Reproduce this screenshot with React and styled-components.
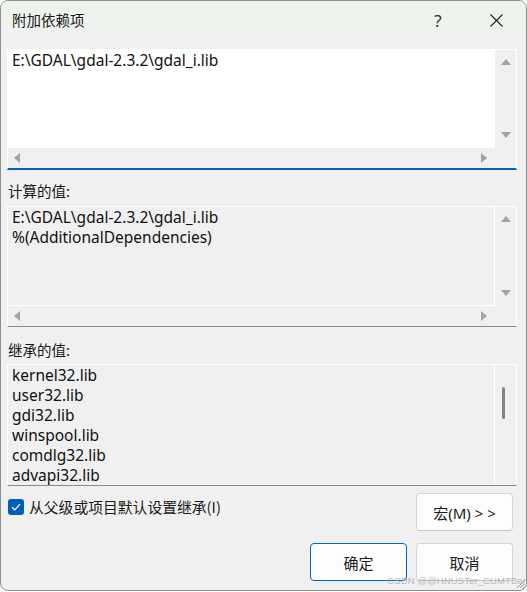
import React from "react";
import styled, { createGlobalStyle, css } from "styled-components";

const Global = createGlobalStyle`
  html, body { margin: 0; padding: 0; background: #ffffff; }
  body { font-family: "Noto Sans", "Noto Sans CJK SC", sans-serif; color: #1b1b1b; }
`;

const Window = styled.div`
  position: relative;
  width: 527px;
  height: 591px;
  box-sizing: border-box;
  border: 1px solid #8e8e8e;
  border-radius: 8px;
  background: #f0f0f0;
  overflow: hidden;
  display: flex;
  flex-direction: column;
`;

const TitleBar = styled.div`
  height: 39px;
  flex: none;
  display: flex;
  align-items: center;
  padding-left: 11px;
  background: linear-gradient(180deg, #eef3ec 0%, #eff2ee 70%, #f0f0f0 100%);
  font-family: "Noto Sans CJK SC", sans-serif;
  font-size: 14.5px;
  color: #1a1a1a;
`;

const Title = styled.div`
  flex: 1;
  margin-top: -2px;
`;

const TitleButton = styled.div`
  width: ${(p) => p.$w}px;
  height: 39px;
  display: flex;
  align-items: center;
  justify-content: center;
  font-family: "Noto Sans", sans-serif;
  font-size: 17px;
  color: #333;
`;

const Body = styled.div`
  flex: 1;
  display: flex;
  flex-direction: column;
  padding: 9px 9px 0 6px;
`;

const Field = styled.div`
  display: flex;
  flex-direction: column;
  border: 1px solid #ffffff;
  border-bottom: ${(p) => (p.$focused ? "2px solid #0067c0" : "1px solid #8a8a8a")};
  background: #f0f0f0;
  margin-top: ${(p) => p.$mt || 0}px;
`;

const FieldMain = styled.div`
  display: flex;
  height: ${(p) => p.$h}px;
`;

const TextArea = styled.div`
  flex: 1;
  background: ${(p) => (p.$white ? "#ffffff" : "#f0f0f0")};
  border-right: 1px solid #ffffff;
  border-bottom: ${(p) => (p.$bottomLine ? "1px solid #ffffff" : "none")};
  padding: 0 0 0 4px;
  font-size: 15.5px;
  line-height: 20px;
  color: #111;
  overflow: hidden;
  white-space: pre;
`;

const VScroll = styled.div`
  width: 21px;
  flex: none;
  display: flex;
  flex-direction: column;
  align-items: center;
  justify-content: ${(p) => (p.$thumb ? "flex-start" : "space-between")};
  padding: ${(p) => (p.$thumb ? "22px 0 0 0" : "9px 0 10px 0")};
  box-sizing: border-box;
`;

const HScroll = styled.div`
  height: 20px;
  display: flex;
  align-items: center;
  justify-content: space-between;
  padding: 0 29px 0 6px;
`;

const Arrow = styled.div`
  width: 0;
  height: 0;
  ${(p) =>
    p.$dir === "up" &&
    css`
      border-left: 5px solid transparent;
      border-right: 5px solid transparent;
      border-bottom: 6px solid #a3a3a3;
    `}
  ${(p) =>
    p.$dir === "down" &&
    css`
      border-left: 5px solid transparent;
      border-right: 5px solid transparent;
      border-top: 6px solid #a3a3a3;
    `}
  ${(p) =>
    p.$dir === "left" &&
    css`
      border-top: 5px solid transparent;
      border-bottom: 5px solid transparent;
      border-right: 6px solid #a3a3a3;
    `}
  ${(p) =>
    p.$dir === "right" &&
    css`
      border-top: 5px solid transparent;
      border-bottom: 5px solid transparent;
      border-left: 6px solid #a3a3a3;
    `}
`;

const Thumb = styled.div`
  width: 3px;
  height: 32px;
  border-radius: 2px;
  background: #858585;
  margin-right: 4px;
`;

const Label = styled.div`
  font-family: "Noto Sans CJK SC", sans-serif;
  font-size: 14.5px;
  line-height: 20px;
  color: #1a1a1a;
  margin-top: ${(p) => p.$mt}px;
  padding-left: 1px;
`;

const OptionsRow = styled.div`
  display: flex;
  justify-content: space-between;
  align-items: flex-start;
  margin-top: 7px;
  padding-right: 4px;
`;

const CheckRow = styled.label`
  display: flex;
  align-items: center;
  gap: 5px;
  margin-top: 4px;
  padding-left: 1px;
  font-family: "Noto Sans CJK SC", sans-serif;
  font-size: 14.8px;
  line-height: 20px;
  color: #1a1a1a;
`;

const CheckBox = styled.span`
  width: 16px;
  height: 16px;
  flex: none;
  border-radius: 3px;
  background: #005fb8;
  display: flex;
  align-items: center;
  justify-content: center;
`;

const ButtonRow = styled.div`
  display: flex;
  justify-content: flex-end;
  gap: 9px;
  margin-top: 12px;
  padding-right: 4px;
`;

const Button = styled.button`
  width: 97px;
  height: 38px;
  box-sizing: border-box;
  border-radius: 4px;
  border: 1px solid ${(p) => (p.$primary ? "#0067c0" : "#d6d6d6")};
  border-bottom-color: ${(p) => (p.$primary ? "#0067c0" : "#c4c4c4")};
  background: #fdfdfd;
  font-family: "Noto Sans", "Noto Sans CJK SC", sans-serif;
  font-size: 15px;
  color: #1a1a1a;
  padding: 0;
  display: flex;
  align-items: center;
  justify-content: center;
  white-space: pre;
`;

const Watermark = styled.div`
  position: absolute;
  right: 0;
  bottom: 4px;
  font-family: "Liberation Sans", sans-serif;
  font-size: 9.5px;
  letter-spacing: 0.1px;
  color: rgba(165, 165, 165, 0.75);
  pointer-events: none;
`;

const Grip = styled.svg`
  position: absolute;
  right: 1px;
  bottom: 1px;
`;

export default function App() {
  const inherited = [
    "kernel32.lib",
    "user32.lib",
    "gdi32.lib",
    "winspool.lib",
    "comdlg32.lib",
    "advapi32.lib",
  ];
  return (
    <>
      <Global />
      <Window>
        <TitleBar>
          <Title>附加依赖项</Title>
          <TitleButton $w={56}>?</TitleButton>
          <TitleButton $w={60}>
            <svg width="13" height="13" viewBox="0 0 13 13">
              <path d="M0.5 0.5 L12.5 12.5 M12.5 0.5 L0.5 12.5" stroke="#222" strokeWidth="1.1" fill="none" />
            </svg>
          </TitleButton>
        </TitleBar>
        <Body>
          <Field $focused>
            <FieldMain $h={98}>
              <TextArea $white>E:\GDAL\gdal-2.3.2\gdal_i.lib</TextArea>
              <VScroll>
                <Arrow $dir="up" />
                <Arrow $dir="down" />
              </VScroll>
            </FieldMain>
            <HScroll>
              <Arrow $dir="left" />
              <Arrow $dir="right" />
            </HScroll>
          </Field>

          <Label $mt={11}>计算的值:</Label>
          <Field $mt={5}>
            <FieldMain $h={99}>
              <TextArea $bottomLine>{"E:\\GDAL\\gdal-2.3.2\\gdal_i.lib\n%(AdditionalDependencies)"}</TextArea>
              <VScroll>
                <Arrow $dir="up" />
                <Arrow $dir="down" />
              </VScroll>
            </FieldMain>
            <HScroll>
              <Arrow $dir="left" />
              <Arrow $dir="right" />
            </HScroll>
          </Field>

          <Label $mt={13}>继承的值:</Label>
          <Field $mt={4}>
            <FieldMain $h={120}>
              <TextArea>{inherited.join("\n")}</TextArea>
              <VScroll $thumb>
                <Thumb />
              </VScroll>
            </FieldMain>
          </Field>

          <OptionsRow>
            <CheckRow>
              <CheckBox>
                <svg width="10" height="8" viewBox="0 0 10 8">
                  <path d="M1 4.2 L3.8 6.8 L9 1.2" stroke="#fff" strokeWidth="1.2" fill="none" />
                </svg>
              </CheckBox>
              <span>从父级或项目默认设置继承(I)</span>
            </CheckRow>
            <Button>{"宏(M) > >"}</Button>
          </OptionsRow>

          <ButtonRow>
            <Button $primary>确定</Button>
            <Button>取消</Button>
          </ButtonRow>
        </Body>
        <Watermark>CSDN @@HNUSTer_CUMTBer</Watermark>
        <Grip width="10" height="10" viewBox="0 0 10 10">
          <path d="M9 2 L2 9 M9 5 L5 9 M9 8 L8 9" stroke="#9a9a9a" strokeWidth="1" />
        </Grip>
      </Window>
    </>
  );
}
